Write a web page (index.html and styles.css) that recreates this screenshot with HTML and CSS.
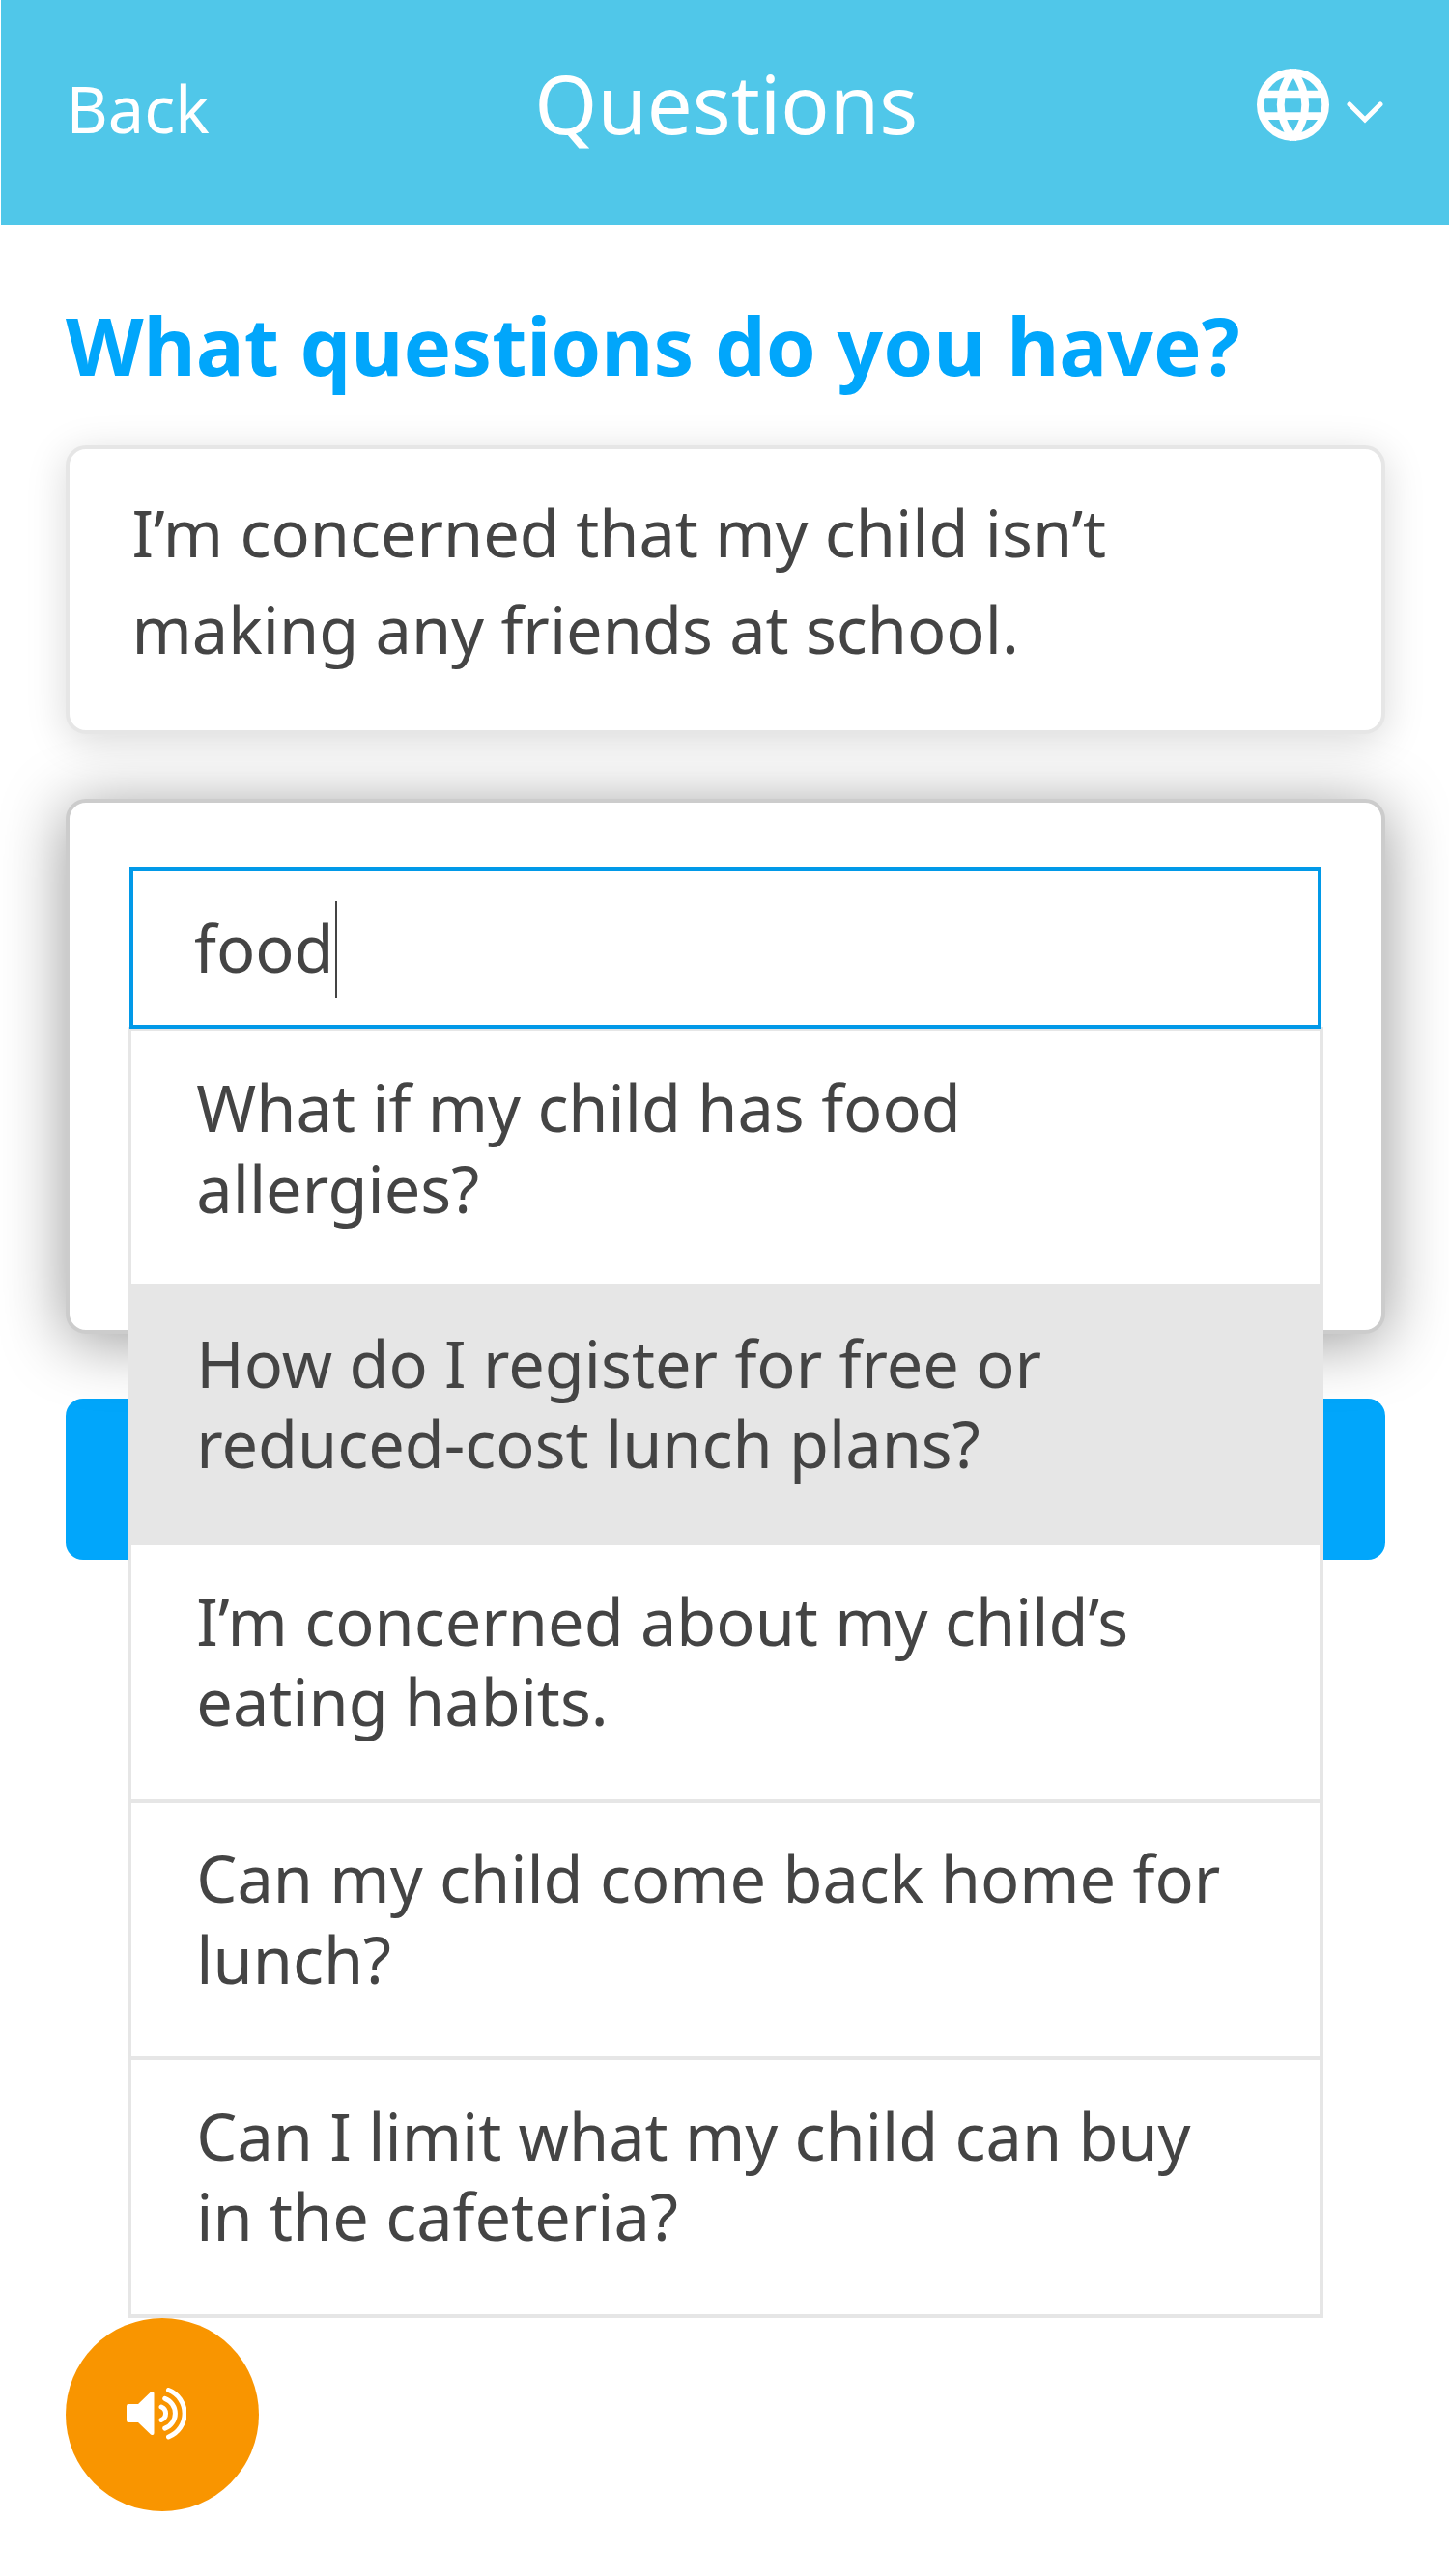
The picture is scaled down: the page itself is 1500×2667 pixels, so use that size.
FILE: index.html
```html
<!DOCTYPE html>
<html lang="en">
<head>
<meta charset="utf-8">
<title>Questions</title>
<link rel="stylesheet" href="styles.css">
</head>
<body>
<header class="topbar">
  <a class="back">Back</a>
  <h1 class="title">Questions</h1>
  <div class="language">
    <svg class="globe" viewBox="0 0 75 75" fill="none" stroke="#fff" stroke-width="7.7">
      <circle cx="37.5" cy="37.5" r="33.650"/>
      <path d="M6 26.500H69M6 49.200H69M37.500 2Q12 37.500 37.500 73M37.500 2Q63 37.500 37.500 73"/>
    </svg>
    <svg class="chevron" viewBox="0 0 38 23" fill="none" stroke="#fff" stroke-width="5" stroke-linecap="round"><path d="M3 3L19 19L35 3"/></svg>
  </div>
</header>
<main class="page">
  <h2 class="heading">What questions do you have?</h2>
  <section class="card">I’m concerned that my child isn’t making any friends at school.</section>
  <section class="card card-active">
    <div class="search"><span class="query">food</span><span class="caret"></span></div>
    <ul class="suggestions">
      <li class="option">What if my child has food allergies?</li>
      <li class="option option-selected">How do I register for free or reduced-cost lunch plans?</li>
      <li class="option">I’m concerned about my child’s eating habits.</li>
      <li class="option">Can my child come back home for lunch?</li>
      <li class="option">Can I limit what my child can buy in the cafeteria?</li>
    </ul>
  </section>
  <button class="submit" type="button" aria-label="Submit"></button>
</main>
<footer class="footer">
  <button class="listen" type="button" aria-label="Listen">
    <svg class="speaker" viewBox="0 0 62 54">
      <path d="M2 17H12L25 4.500Q28.500 3 28.500 6V47Q28.500 50 25 48.500L12 36H2Q0 36 0 34V19Q0 17 2 17Z" fill="#fff"/>
      <g fill="none" stroke="#fff" stroke-width="5" stroke-linecap="round"><path d="M36 20A7.300 7.300 0 0 1 36 33.500M39.700 11.300A16.500 16.500 0 0 1 39.700 42.200M43.500 2.500A26 26 0 0 1 43.500 51"/></g>
    </svg>
  </button>
</footer>
</body>
</html>
```

FILE: styles.css
```css
* { box-sizing: border-box; }

body {
  margin: 0;
  width: 1500px;
  height: 2667px;
  display: flex;
  flex-direction: column;
  background: #fff;
  color: #444;
  font-family: "Noto Sans", sans-serif;
  font-size: 66.67px;
  overflow: hidden;
}

.topbar {
  display: grid;
  grid-template-columns: 1fr auto 1fr;
  height: 233.4px;
  margin-left: 1px;
  padding: 0 68px 0 67.500px;
  background: #50c7e9;
  color: #fff;
}

.back { padding-top: 63px; line-height: 100px; }

.title {
  margin: 0;
  padding: 55px 0 0 3px;
  font-size: 83.33px;
  font-weight: 400;
  line-height: 104px;
}

.language {
  display: flex;
  justify-content: flex-end;
  gap: 18px;
  padding-top: 70.500px;
}

.globe { width: 75px; height: 75px; }
.chevron { width: 38px; height: 23px; margin-top: 34px; }

.page {
  flex: 1;
  display: flex;
  flex-direction: column;
  padding: 61px 66px 0 68px;
}

.heading {
  margin: 0 0 42px;
  color: #01a6fb;
  font-size: 83.38px;
  font-weight: 700;
  line-height: 125px;
}

.card {
  height: 299px;
  padding: 36.500px 63px 0 64.500px;
  border: 4px solid #e6e6e6;
  border-radius: 21px;
  background: #fff;
  line-height: 100px;
  box-shadow: 0 8px 42px rgba(0, 0, 0, 0.15);
}

.card-active {
  position: relative;
  height: 554px;
  margin-top: 67px;
  padding: 67px 62px;
  border-color: #ccc;
  box-shadow: 0 8px 67px rgba(0, 0, 0, 0.4);
}

.search {
  display: flex;
  align-items: center;
  width: 1234px;
  height: 167px;
  padding-left: 63px;
  border: 4px solid #0199e8;
  position: relative;
  z-index: 2;
}

.caret { width: 2px; height: 100px; margin: 2px 0 0 1px; background: #444; }

.suggestions {
  position: absolute;
  z-index: 1;
  top: 232px;
  left: 60.300px;
  width: 1237.500px;
  margin: 0;
  padding: 0;
  border: 4px solid #e6e6e6;
  background: #fff;
  list-style: none;
}

.option {
  height: 266.670px;
  padding: 36.500px 67px 0 67px;
  border-bottom: 4px solid #e6e6e6;
  line-height: 83.33px;
}

.option:first-child { height: 266px; padding-top: 37.800px; }
.option:last-child { height: 263px; border-bottom: 0; }
.option-selected { background: #e6e6e6; }

.submit {
  height: 166.500px;
  margin-top: 67px;
  border: 0;
  border-radius: 18px;
  background: #01a6fb;
}

.footer { padding: 0 67.500px 67px; }

.listen {
  display: flex;
  align-items: center;
  width: 200px;
  height: 200px;
  padding: 0 0 3px 63.500px;
  border: 0;
  border-radius: 50%;
  background: #f99500;
}

.speaker { width: 62px; height: 54px; }
```
